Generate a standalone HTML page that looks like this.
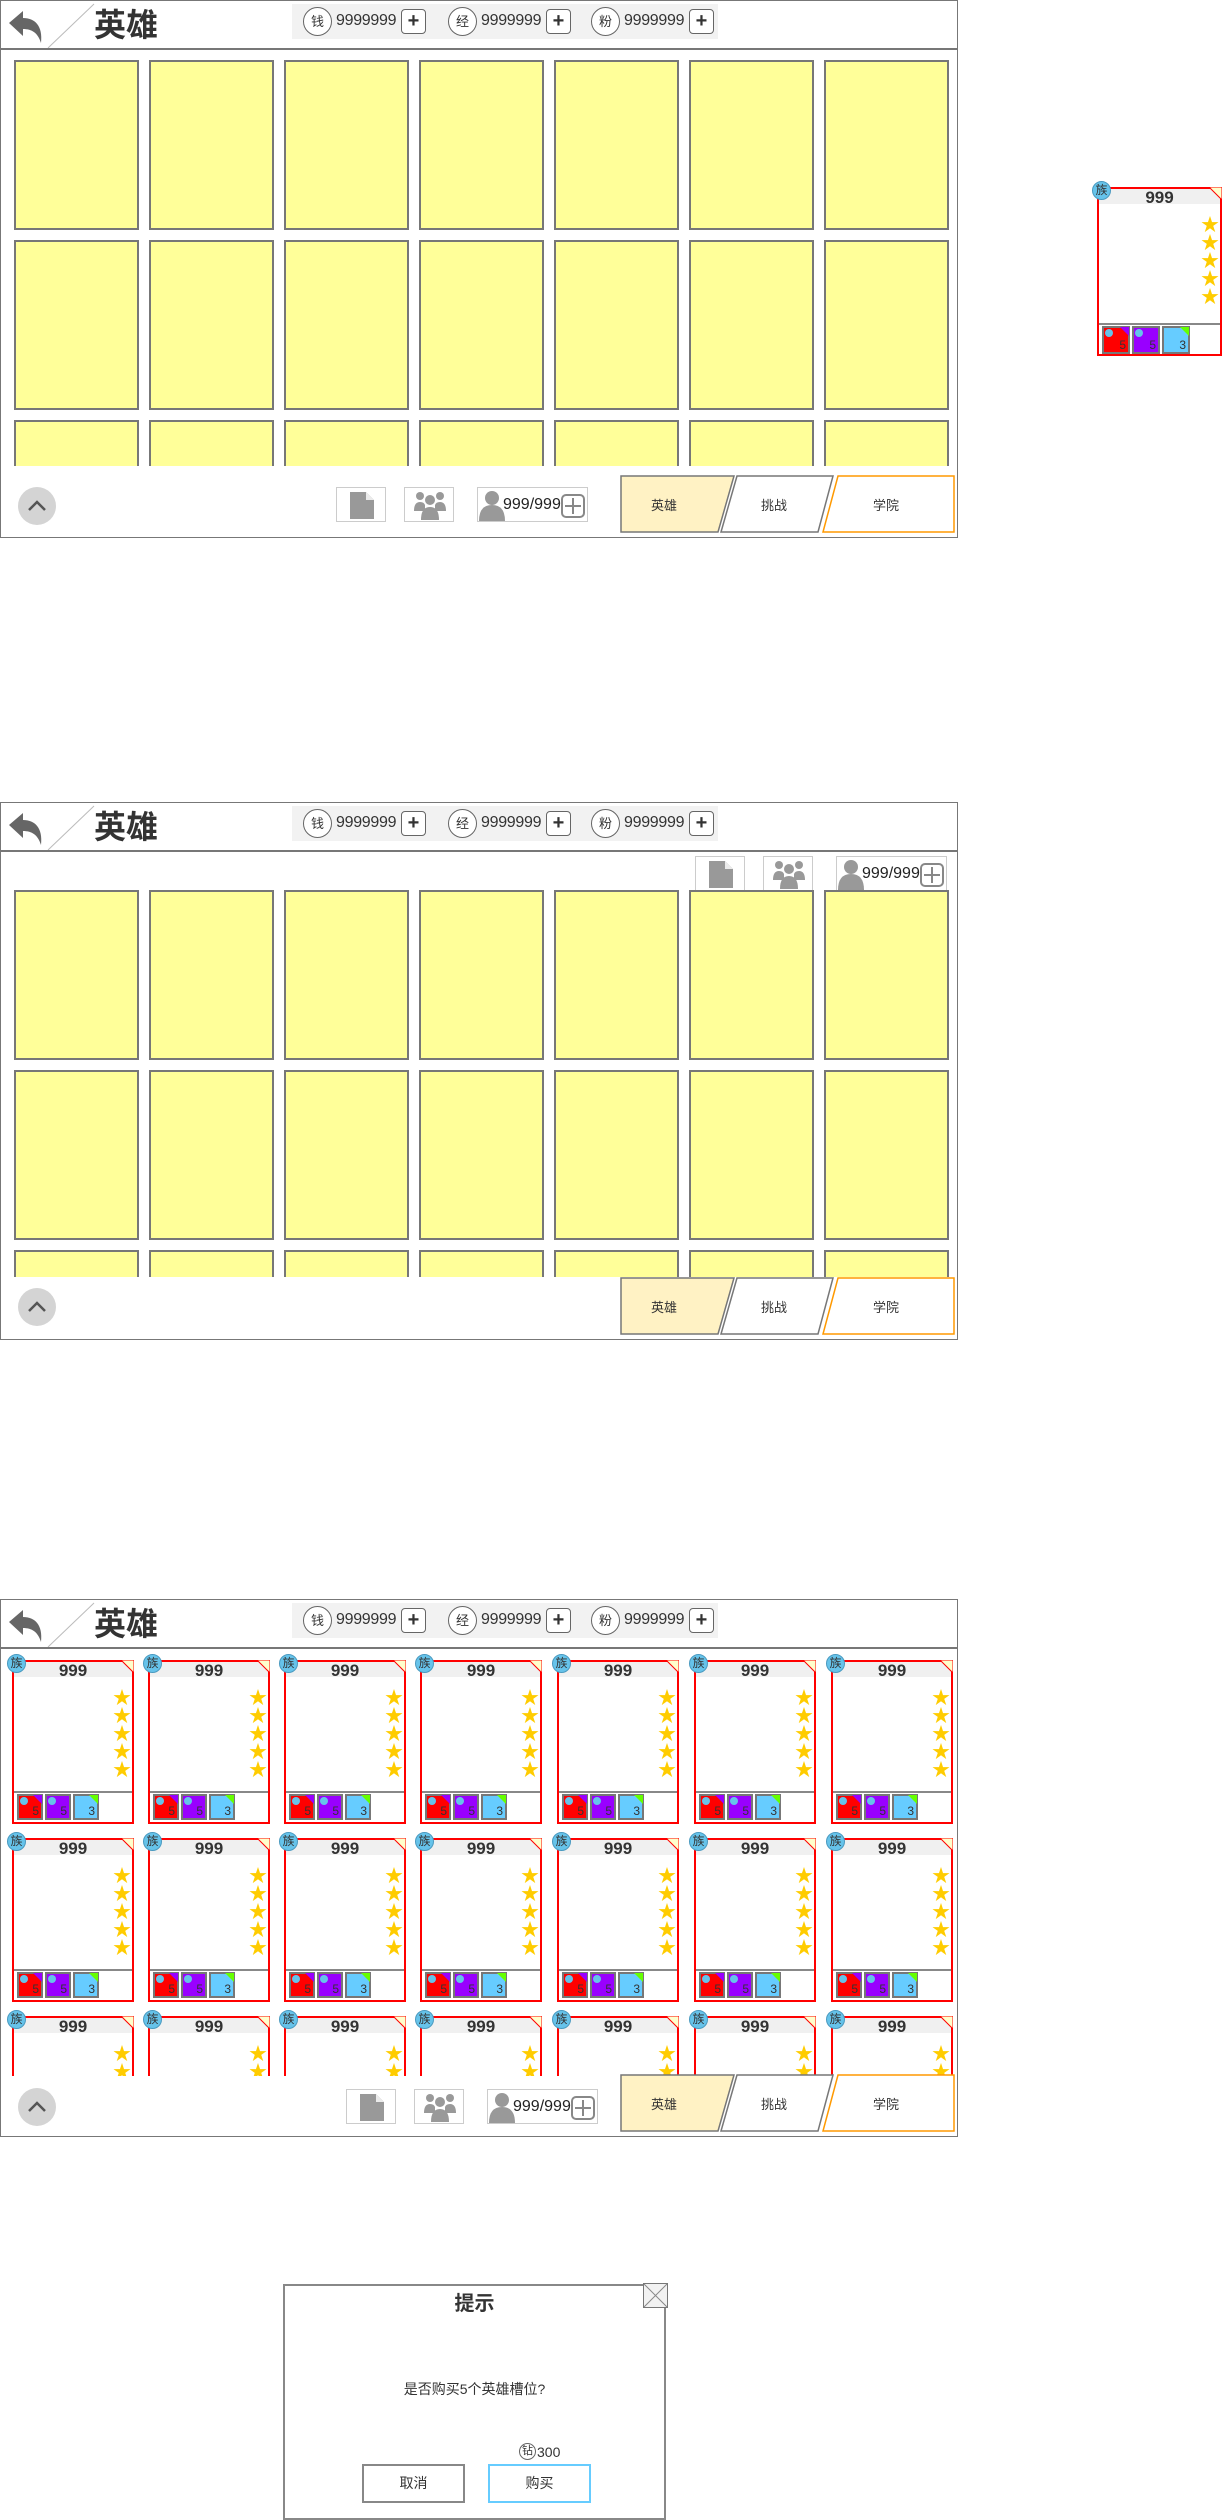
<!DOCTYPE html>
<html><head><meta charset="utf-8">
<style>
*{margin:0;padding:0;box-sizing:border-box}
body{width:1225px;height:2520px;background:#fff;position:relative;overflow:hidden;font-family:"Liberation Sans","Noto Sans CJK SC",sans-serif;color:#333}
.a{position:absolute}
.panel{position:absolute;left:0;width:958px;height:538px;border:1px solid #777;overflow:hidden;background:#fff}
.hline{position:absolute;left:0;right:0;top:47px;border-top:2px solid #777}
.title{position:absolute;left:93px;top:4px;font-size:32px;font-weight:bold;line-height:40px;color:#333}
.cur{position:absolute;left:291px;top:3px;width:426px;height:35px;background:#f2f2f2}
.circ{position:absolute;width:29px;height:29px;border:1px solid #666;border-radius:50%;background:#fff;font-size:13px;text-align:center;line-height:27px}
.num{position:absolute;font-size:16px;line-height:20px;letter-spacing:-0.3px}
.plus{position:absolute;width:25px;height:25px;border:1px solid #666;border-radius:4px;background:#fff;font-size:20px;text-align:center;line-height:22px;font-weight:bold}
.tile{position:absolute;width:125px;height:170px;background:#ffff99;border:2px solid #777}
.ibox{position:absolute;height:35px;border:1px solid #ccc;background:#fff}
.card{position:absolute;border:2px solid #f00;background:#fff}
.card .hd{position:absolute;left:0;right:0;top:0;height:15px;background:#f0f0f0;text-align:center;font-weight:bold;font-size:17px;line-height:17px;color:#333}
.card .bd{position:absolute;width:19px;height:19px;border-radius:50%;background:#66c3ea;border:1px solid #4a9ac0;font-size:12px;line-height:17px;text-align:center;color:#333}
.card .st{position:absolute;right:1px;color:#ffcc00;font-size:18px;line-height:18px;width:18px;text-align:center}
.card .dv{position:absolute;left:0;right:0;border-top:2px solid #888}
.sq{position:absolute;border:2px solid #777}
.sq span{position:absolute;right:2px;bottom:0;font-size:12px;color:#333;line-height:14px}
.dot{position:absolute;left:1px;top:1px;width:8px;height:8px;border-radius:50%;background:#66c3ea}
</style></head><body>
<div id="root"></div>
<div class="a" style="left:283px;top:2284px;width:383px;height:236px;border:2px solid #888;background:#fff"></div>
<svg class="a" style="left:643px;top:2283px" width="25" height="25"><rect x="0.5" y="0.5" width="24" height="24" fill="#f2f2f2" stroke="#777"/><path d="M1 1L24 24M24 1L1 24" stroke="#888"/></svg>
<div class="a" style="left:283px;width:383px;top:2292px;text-align:center;font-size:20px;font-weight:bold;line-height:24px">提示</div>
<div class="a" style="left:283px;width:383px;top:2380px;text-align:center;font-size:14px;line-height:18px;">是否购买5个英雄槽位?</div>
<div class="a" style="left:519px;top:2443px;width:17px;height:17px;border:1px solid #666;border-radius:50%;font-size:11px;line-height:15px;text-align:center">钻</div>
<div class="a" style="left:537px;top:2444px;font-size:14px;line-height:16px">300</div>
<div class="a" style="left:362px;top:2464px;width:103px;height:39px;border:2px solid #888;text-align:center;line-height:35px;font-size:14px">取消</div>
<div class="a" style="left:488px;top:2464px;width:103px;height:39px;border:2px solid #66ccff;text-align:center;line-height:35px;font-size:14px">购买</div>
<script>
function header(){
 var h='<svg class="a" style="left:6px;top:8px" width="40" height="36" viewBox="0 0 40 36"><path d="M2 14L16 2V9C28 9 36 17 34 34C31 24 25 20 16 20V27Z" fill="#666"/></svg>';
 h+='<svg class="a" style="left:46px;top:2px" width="48" height="46"><path d="M1 45L47 1" stroke="#bbb" stroke-width="1"/></svg>';
 h+='<div class="title">英雄</div><div class="cur"></div>';
 var cs=[['钱',302],['经',447],['粉',590]];
 cs.forEach(function(c){var x=c[1];
  h+='<div class="circ" style="left:'+x+'px;top:6px">'+c[0]+'</div>';
  h+='<div class="num" style="left:'+(x+33)+'px;top:10px">9999999</div>';
  h+='<div class="plus" style="left:'+(x+98)+'px;top:8px">+</div>';});
 h+='<div class="hline"></div>';
 return h;
}
function tiles(top,clip){
 var h='<div class="a" style="left:0;top:'+top+'px;width:958px;height:'+(clip-top)+'px;overflow:hidden">';
 var xs=[13,148,283,418,553,688,823];
 for(var r=0;r<3;r++)for(var i=0;i<7;i++)h+='<div class="tile" style="left:'+xs[i]+'px;top:'+(r*180)+'px"></div>';
 return h+'</div>';
}
function card(x,y,w,hh){
 var s='<div class="card" style="left:'+x+'px;top:'+y+'px;width:'+w+'px;height:'+hh+'px">';
 s+='<div class="hd">999</div>';
 s+='<svg class="a" style="right:-2px;top:-2px" width="13" height="13"><path d="M0 0H13V13Z" fill="#ffffcc" stroke="#f00" stroke-width="1"/></svg>';
 for(var k=0;k<5;k++)s+='<div class="st" style="top:'+(27+k*18)+'px">★</div>';
 var dy=hh-35;
 s+='<div class="dv" style="top:'+dy+'px"></div>';
 var q=hh>165?28:26,g=q+2;
 var cols=[['#f00','#90f',1,'5'],['#90f',null,1,'5'],['#6cf','#6f0',0,'3']];
 cols.forEach(function(c,i){
  s+='<div class="sq" style="left:'+(3+i*g)+'px;top:'+(dy+3)+'px;width:'+q+'px;height:'+q+'px;background:'+c[0]+'">';
  if(c[2])s+='<div class="dot"></div>';
  if(c[1])s+='<svg class="a" style="right:-1px;top:-1px" width="9" height="9"><path d="M0 0H9V9Z" fill="'+c[1]+'"/></svg>';
  s+='<span>'+c[3]+'</span></div>';});
 s+='</div>';
 s+='<div class="card" style="border:none;background:none;left:'+x+'px;top:'+y+'px;width:0;height:0"><div class="bd" style="left:-5px;top:-6px">族</div></div>';
 return s;
}
function tabs(){
 return '<svg class="a" style="left:0;top:0" width="958" height="538"><polygon points="620,475 733,475 717,531 620,531" fill="#fff2c4" stroke="#777" stroke-width="1.5"/><polygon points="736,475 832,475 817,531 720,531" fill="#fff" stroke="#777" stroke-width="1.5"/><polygon points="837,475 953,475 953,531 822,531" fill="#fff" stroke="#f90" stroke-width="1.5"/></svg>'+
 '<div class="a" style="left:650px;top:494px;font-size:13px">英雄</div><div class="a" style="left:760px;top:494px;font-size:13px">挑战</div><div class="a" style="left:872px;top:494px;font-size:13px">学院</div>';
}
function upbtn(y){return '<svg class="a" style="left:17px;top:'+y+'px" width="38" height="38"><circle cx="19" cy="19" r="19" fill="#d4d4d4"/><path d="M11 23L19 15L27 23" stroke="#555" stroke-width="2.5" fill="none"/></svg>';}
function icons(dx,y,cw){
 var s='<div class="ibox" style="left:'+dx+'px;top:'+y+'px;width:50px"><svg class="a" style="left:13px;top:4px" width="24" height="27"><path d="M0 0H16L24 8V27H0Z" fill="#999"/><path d="M16 0V8H24" fill="#fff" opacity=".8"/></svg></div>';
 s+='<div class="ibox" style="left:'+(dx+68)+'px;top:'+y+'px;width:50px"><svg class="a" style="left:9px;top:3px" width="32" height="29" viewBox="0 0 32 29"><circle cx="6" cy="5" r="4" fill="#999"/><circle cx="26" cy="5" r="4" fill="#999"/><circle cx="16" cy="9" r="5" fill="#999"/><path d="M0 20Q0 11 6 11Q10 11 11 14L11 20Z M32 20Q32 11 26 11Q22 11 21 14L21 20Z" fill="#999"/><path d="M7 29Q7 16 16 16Q25 16 25 29Z" fill="#999"/></svg></div>';
 s+='<div class="ibox" style="left:'+(dx+141)+'px;top:'+y+'px;width:'+cw+'px"><svg class="a" style="left:1px;top:2px" width="26" height="31"><circle cx="13" cy="8" r="7" fill="#999"/><path d="M0 31Q0 15 13 15Q26 15 26 31Z" fill="#999"/></svg><div class="a" style="left:25px;top:8px;font-size:16px;line-height:18px;color:#222">999/999</div><svg class="a" style="right:2px;top:6px" width="24" height="24"><rect x="1" y="1" width="22" height="22" rx="4" fill="#fff" stroke="#888" stroke-width="2"/><path d="M12 4V20M4 12H20" stroke="#888" stroke-width="2"/></svg></div>';
 return s;
}
var h='';
h+='<div class="panel" style="top:0">'+header()+tiles(59,465)+upbtn(486)+icons(335,486,111)+tabs()+'</div>';
h+='<div class="panel" style="top:802px">'+header()+icons(694,53,111)+tiles(87,474)+upbtn(485)+tabs()+'</div>';
var p='<div class="panel" style="top:1599px">'+header()+'<div class="a" style="left:0;top:0;width:958px;height:476px;overflow:hidden">';
var cx=[11,147,283,419,556,693,830];
for(var r=0;r<3;r++)for(var i=0;i<7;i++)p+=card(cx[i],60+r*178,122,164);
p+='</div>'+upbtn(488)+icons(345,489,111)+tabs()+'</div>';
h+=p;
h+=card(1097,187,125,169);
document.getElementById('root').innerHTML=h;
</script>
</body></html>
